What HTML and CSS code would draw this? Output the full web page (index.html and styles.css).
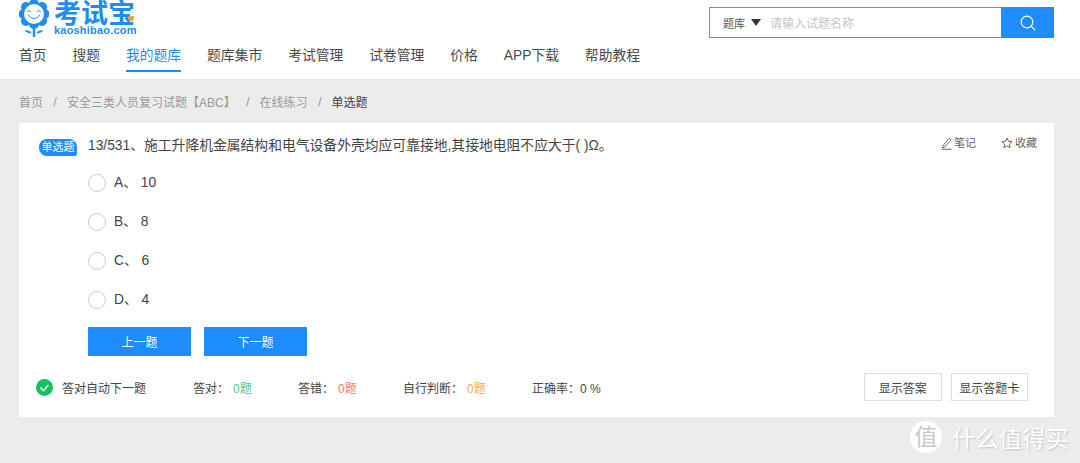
FILE: index.html
```html
<!DOCTYPE html>
<html lang="zh-CN">
<head>
  <meta charset="UTF-8" />
  <title>考试宝</title>
  <link rel="stylesheet" href="styles.css">
</head>
<body>
  <header class="header">
    <div class="top-row">
      <a class="logo">
        <svg class="logo-icon" width="30" height="37" viewBox="0 0 30 37">
          <g fill="#1e8cf5">
            <circle cx="15" cy="4" r="5" />
            <circle cx="23" cy="7" r="5" />
            <circle cx="25.500" cy="14" r="5" />
            <circle cx="23" cy="21" r="5" />
            <circle cx="15" cy="24" r="5" />
            <circle cx="7" cy="21" r="5" />
            <circle cx="4.500" cy="14" r="5" />
            <circle cx="7" cy="7" r="5" />
          </g>
          <circle cx="15" cy="14" r="10" fill="#fff" />
          <g fill="none" stroke="#1e8cf5" stroke-width="1" stroke-linecap="round">
            <path d="M8.500 11.500q1.800-2.200 3.500 0" />
            <path d="M18 11.500q1.800-2.200 3.500 0" />
            <path d="M9 15q6 7.500 12 0" />
          </g>
          <path d="M13.800 27h2.400v10h-2.400z" fill="#1e8cf5" />
          <path d="M12.800 33.500q-4.500 0-7.300-3 5-1 7.300 3zM17.200 33.500q4.500 0 7.300-3-5-1-7.300 3z" fill="#1e8cf5" />
        </svg>
        <span class="logo-text">
          <span class="logo-name">考试宝<i class="logo-mark"></i></span>
          <span class="logo-url">kaoshibao.com</span>
        </span>
      </a>
      <form class="search">
        <span class="search-type">题库<i class="caret"></i></span>
        <span class="search-hint">请输入试题名称</span>
        <button class="search-btn" type="button">
          <svg width="16" height="16" viewBox="0 0 16 16" fill="none" stroke="#fff" stroke-width="1.200" stroke-linecap="round">
            <circle cx="7" cy="7" r="5.800" />
            <path d="M11.200 11.200l3.600 3.600" />
          </svg>
        </button>
      </form>
    </div>
    <nav class="nav">
      <a>首页</a>
      <a>搜题</a>
      <a class="active">我的题库</a>
      <a>题库集市</a>
      <a>考试管理</a>
      <a>试卷管理</a>
      <a>价格</a>
      <a>APP下载</a>
      <a>帮助教程</a>
    </nav>
  </header>

  <div class="crumbs">
    <span>首页</span><i>/</i>
    <span>安全三类人员复习试题【ABC】</span><i>/</i>
    <span>在线练习</span><i>/</i>
    <span class="current">单选题</span>
  </div>

  <main class="card">
    <div class="question">
      <span class="badge">单选题</span>
      <p class="title">13/531、施工升降机金属结构和电气设备外壳均应可靠接地,其接地电阻不应大于( )Ω。</p>
      <div class="tools">
        <span class="tool">
          <svg width="11" height="13" viewBox="0 0 11 13" fill="none" stroke="#666" stroke-width="1">
            <path d="M2 8.500L8.300 1.200l1.800 1.500-6.300 7.300-2.300.8z" />
            <path d="M.5 12.300h10" />
          </svg>笔记</span>
        <span class="tool">
          <svg width="12" height="12" viewBox="0 0 12 12" fill="none" stroke="#666" stroke-width="1">
            <path d="M6 1l1.500 3.300 3.600.4-2.700 2.400.8 3.600L6 8.900l-3.200 1.800.8-3.600L.9 4.700l3.600-.4z" />
          </svg>收藏</span>
      </div>
    </div>

    <ul class="options">
      <li><i class="radio"></i>A、 10</li>
      <li><i class="radio"></i>B、 8</li>
      <li><i class="radio"></i>C、 6</li>
      <li><i class="radio"></i>D、 4</li>
    </ul>

    <div class="pager">
      <button class="btn-primary" type="button">上一题</button>
      <button class="btn-primary" type="button">下一题</button>
    </div>

    <div class="stats">
      <span class="auto">
        <svg width="17" height="17" viewBox="0 0 17 17">
          <circle cx="8.500" cy="8.500" r="8.500" fill="#13c15f" />
          <path d="M4.500 8.700l2.900 2.800 5-5.300" fill="none" stroke="#fff" stroke-width="1.600" />
        </svg>答对自动下一题</span>
      <span class="stat s-right">答对：<em class="green">0题</em></span>
      <span class="stat s-wrong">答错：<em class="red">0题</em></span>
      <span class="stat s-self">自行判断：<em class="orange">0题</em></span>
      <span class="stat s-rate">正确率：0 %</span>
      <span class="actions">
        <button class="btn-plain" type="button">显示答案</button>
        <button class="btn-plain" type="button">显示答题卡</button>
      </span>
    </div>
  </main>

  <div class="watermark">
    <span class="wm-circle">值</span>
    <span class="wm-text">什么值得买</span>
  </div>
</body>
</html>
```

FILE: styles.css
```css
* {
  box-sizing: border-box;
}
html, body {
  height: 463px;
  overflow: hidden;
}
body {
  margin: 0;
  position: relative;
  background: #ebecec;
  color: #333;
  font-family: "Liberation Sans", "Noto Sans CJK SC", sans-serif;
  font-size: 12px;
}
i, em {
  font-style: normal;
}
p, ul {
  margin: 0;
  padding: 0;
}
li {
  list-style: none;
}

/* header */
.header {
  height: 80px;
  background: #fff;
  border-bottom: 1px solid #e6e7e7;
  padding: 0 26px 0 19px;
}
.top-row {
  display: flex;
  justify-content: space-between;
  height: 44px;
}
.logo {
  display: flex;
  gap: 5px;
}
.logo-icon {
  display: block;
}
.logo-text {
  display: flex;
  flex-direction: column;
  padding-top: 5px;
  color: #1e8cf5;
}
.logo-name {
  position: relative;
  font-size: 27px;
  line-height: 19px;
  font-weight: 700;
}
.logo-mark {
  position: absolute;
  right: 3px;
  top: 11px;
  width: 6px;
  height: 5px;
  border-radius: 1px 1px 3px 3px;
  background: #f5a033;
}
.logo-url {
  font-size: 11px;
  line-height: 12px;
  font-weight: 700;
  letter-spacing: 0.200px;
}
.search {
  display: flex;
  align-items: center;
  width: 345px;
  height: 31px;
  margin: 7px 0 0;
  border: 1px solid #4a9bf0;
}
.search-type {
  display: flex;
  align-items: center;
  gap: 6px;
  margin-left: 13px;
  width: 47px;
  font-size: 11px;
  color: #555;
}
.caret {
  width: 0;
  height: 0;
  border: 5px solid transparent;
  border-top: 7px solid #333;
  border-bottom: 0;
}
.search-hint {
  flex: 1;
  font-size: 12px;
  color: #c4c6cb;
}
.search-btn {
  display: flex;
  align-items: center;
  justify-content: center;
  width: 53px;
  height: 31px;
  margin-right: -1px;
  padding: 0;
  border: 0;
  background: #1e8cfc;
}
.nav {
  display: flex;
  gap: 25.900px;
  font-size: 13.800px;
  line-height: 24px;
  color: #4a4a4a;
}
.nav a {
  height: 28px;
  white-space: nowrap;
}
.nav a.active {
  color: #1e8cf5;
  border-bottom: 2px solid #1e8cf5;
}

/* breadcrumb */
.crumbs {
  display: flex;
  align-items: center;
  height: 43px;
  padding-left: 19px;
  color: #999;
}
.crumbs i {
  margin: 0 10px 0 10.600px;
}
.crumbs .current {
  color: #444;
}

/* question card */
.card {
  width: 1035px;
  height: 294px;
  margin-left: 19px;
  background: #fff;
}
.question {
  display: flex;
  align-items: flex-start;
  height: 39px;
  padding: 13px 17px 0 20px;
}
.badge {
  width: 38px;
  height: 17px;
  margin: 3px 11px 0 0;
  border-radius: 8px 8px 2px 8px;
  background: #1e8cfc;
  color: #fff;
  font-size: 11px;
  line-height: 17px;
  text-align: center;
}
.title {
  flex: 1;
  font-size: 13.800px;
  line-height: 20px;
  color: #444;
}
.tools {
  display: flex;
  gap: 25px;
  font-size: 11px;
  line-height: 14px;
  color: #666;
}
.tool {
  display: flex;
  align-items: center;
  gap: 2px;
}
.options {
  padding-left: 69px;
  font-size: 13.800px;
  color: #444;
}
.options li {
  display: flex;
  align-items: center;
  height: 39px;
  padding-bottom: 2px;
}
.radio {
  width: 18px;
  height: 18px;
  margin: 4px 8px 0 0;
  border: 1px solid #ccc;
  border-radius: 50%;
}
.pager {
  display: flex;
  gap: 13px;
  margin-top: 9px;
  padding-left: 69px;
}
.btn-primary {
  width: 103px;
  height: 29px;
  padding: 0;
  border: 0;
  background: #1e8cfc;
  color: #fff;
  font: inherit;
}
.stats {
  display: flex;
  align-items: center;
  height: 28px;
  margin-top: 17px;
  padding: 0 26px 0 17px;
  color: #444;
}
.auto {
  display: flex;
  align-items: center;
  gap: 9px;
  width: 157px;
}
.stat {
  white-space: nowrap;
}
.stat em {
  margin-left: 4px;
}
.s-right {
  width: 105px;
}
.s-wrong {
  width: 105px;
}
.s-self {
  width: 129px;
}
.s-rate {
  flex: 1;
}
.green {
  color: #4cc38a;
}
.red {
  color: #fb7a6c;
}
.orange {
  color: #fdab3e;
}
.actions {
  display: flex;
  gap: 9px;
}
.btn-plain {
  width: 77.500px;
  height: 28px;
  padding: 0;
  border: 1px solid #dedede;
  background: #fff;
  color: #444;
  font: inherit;
}

/* site watermark over the screenshot */
.watermark {
  position: absolute;
  left: 910px;
  top: 420px;
  display: flex;
  align-items: center;
  gap: 10px;
  color: #fff;
  white-space: nowrap;
}
.wm-circle {
  width: 32px;
  height: 32px;
  border-radius: 50%;
  background: #fff;
  color: #c9c9c9;
  font-size: 23px;
  line-height: 32px;
  text-align: center;
}
.wm-text {
  font-size: 23px;
  letter-spacing: 0.500px;
  text-shadow: 1px 1px 2px rgba(0, 0, 0, 0.18);
}
```
